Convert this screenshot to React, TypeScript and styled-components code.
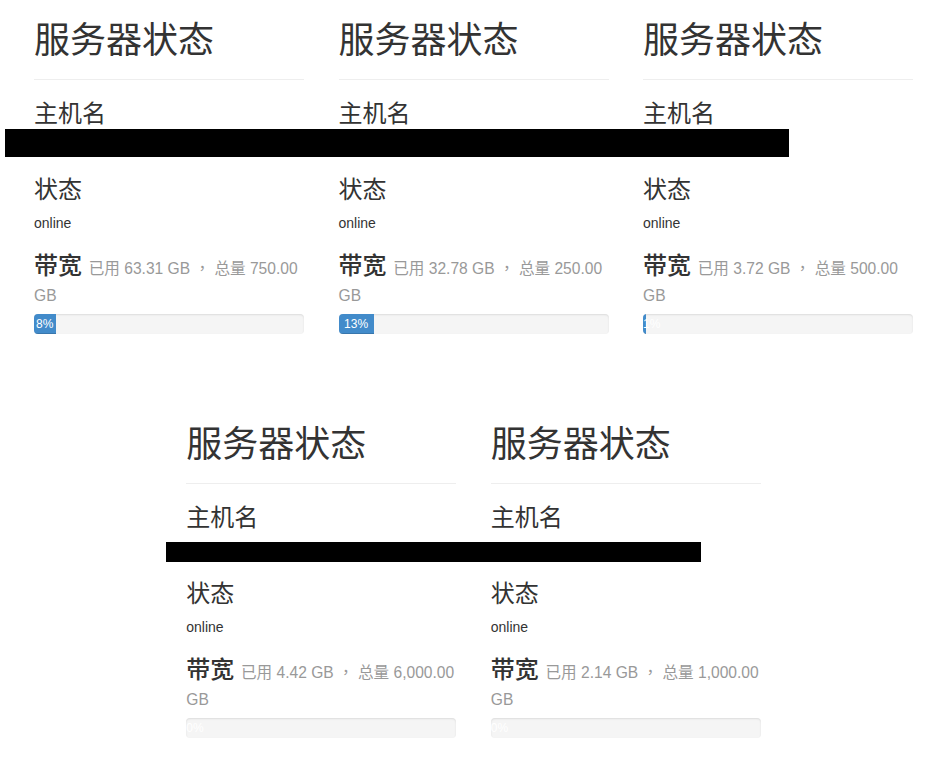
import React from "react";
import styled, { createGlobalStyle } from "styled-components";

const Global = createGlobalStyle`
  html, body { margin: 0; padding: 0; background: #fff; }
  body {
    font-family: "Liberation Sans", "Noto Sans CJK SC", sans-serif;
    font-size: 14px;
    line-height: 1.42857;
    color: #333;
  }
  * { box-sizing: border-box; }
`;

const Page = styled.div`
  position: relative;
  width: 929px;
  height: 769px;
  overflow: hidden;
  padding-left: 16.75px;
`;

const Row = styled.div<{ $offset: number; $top: number }>`
  display: flex;
  margin-left: ${(p) => p.$offset}px;
  margin-top: ${(p) => p.$top}px;
`;

const Col = styled.div`
  flex: none;
  width: 304.5px;
  padding: 0 17.25px;
`;

const PageHeader = styled.div`
  margin: 21px 0 21px;
  padding-bottom: 8px;
  border-bottom: 1px solid #eee;
`;

const Title = styled.h1`
  margin: 0 0 10px;
  font-size: 36px;
  line-height: 39.6px;
  font-weight: 400;
  color: #333;
`;

const Label = styled.h3<{ $mt?: number; $mb?: number; $bold?: boolean }>`
  margin: ${(p) => p.$mt ?? 0}px 0 ${(p) => p.$mb ?? 10}px;
  font-size: 24px;
  line-height: 26.4px;
  font-weight: ${(p) => (p.$bold ? 500 : 400)};
  color: #333;
`;

const Small = styled.small`
  font-size: 65%;
  font-weight: normal;
  line-height: 1;
  color: #999;
`;

const Comma = styled.span`
  font-family: "Noto Sans CJK TC", "Noto Sans CJK SC", sans-serif;
`;

const HostName = styled.p`
  margin: 0 0 20px;
  height: 20px;
`;

const Status = styled.p`
  margin: 0 0 10px;
  font-size: 14px;
  line-height: 20px;
`;

const Progress = styled.div`
  height: 20px;
  margin-bottom: 20px;
  overflow: hidden;
  background-color: #f5f5f5;
  border-radius: 4px;
  box-shadow: inset 0 1px 2px rgba(0, 0, 0, 0.1);
`;

const Bar = styled.div`
  float: left;
  height: 100%;
  font-size: 12px;
  line-height: 20px;
  color: #fff;
  text-align: center;
  white-space: nowrap;
  background-color: #428bca;
  box-shadow: inset 0 -1px 0 rgba(0, 0, 0, 0.15);
`;

const Redaction = styled.div<{ $l: number; $t: number; $w: number; $h: number }>`
  position: absolute;
  left: ${(p) => p.$l}px;
  top: ${(p) => p.$t}px;
  width: ${(p) => p.$w}px;
  height: ${(p) => p.$h}px;
  background: #000;
`;

type Server = { used: string; total: string; pct: number };

const row1: Server[] = [
  { used: "63.31", total: "750.00", pct: 8 },
  { used: "32.78", total: "250.00", pct: 13 },
  { used: "3.72", total: "500.00", pct: 1 },
];
const row2: Server[] = [
  { used: "4.42", total: "6,000.00", pct: 0 },
  { used: "2.14", total: "1,000.00", pct: 0 },
];

function Card({ s }: { s: Server }) {
  return (
    <Col>
      <PageHeader>
        <Title>服务器状态</Title>
      </PageHeader>
      <Label>主机名</Label>
      <HostName />
      <Label>状态</Label>
      <Status>online</Status>
      <Label $mt={20} $mb={8} $bold>
        带宽{" "}
        <Small>
          已用 {s.used} GB <Comma>，</Comma> 总量 {s.total} GB
        </Small>
      </Label>
      <Progress>
        <Bar style={{ width: `${s.pct}%` }}>{s.pct}%</Bar>
      </Progress>
    </Col>
  );
}

export default function App() {
  return (
    <>
      <Global />
      <Page>
        <Row $offset={0} $top={0}>
          {row1.map((s, i) => (
            <Card key={i} s={s} />
          ))}
        </Row>
        <Row $offset={152.25} $top={49.8}>
          {row2.map((s, i) => (
            <Card key={i} s={s} />
          ))}
        </Row>
        <Redaction $l={5} $t={129} $w={784} $h={28} />
        <Redaction $l={166} $t={542} $w={535} $h={20} />
      </Page>
    </>
  );
}
